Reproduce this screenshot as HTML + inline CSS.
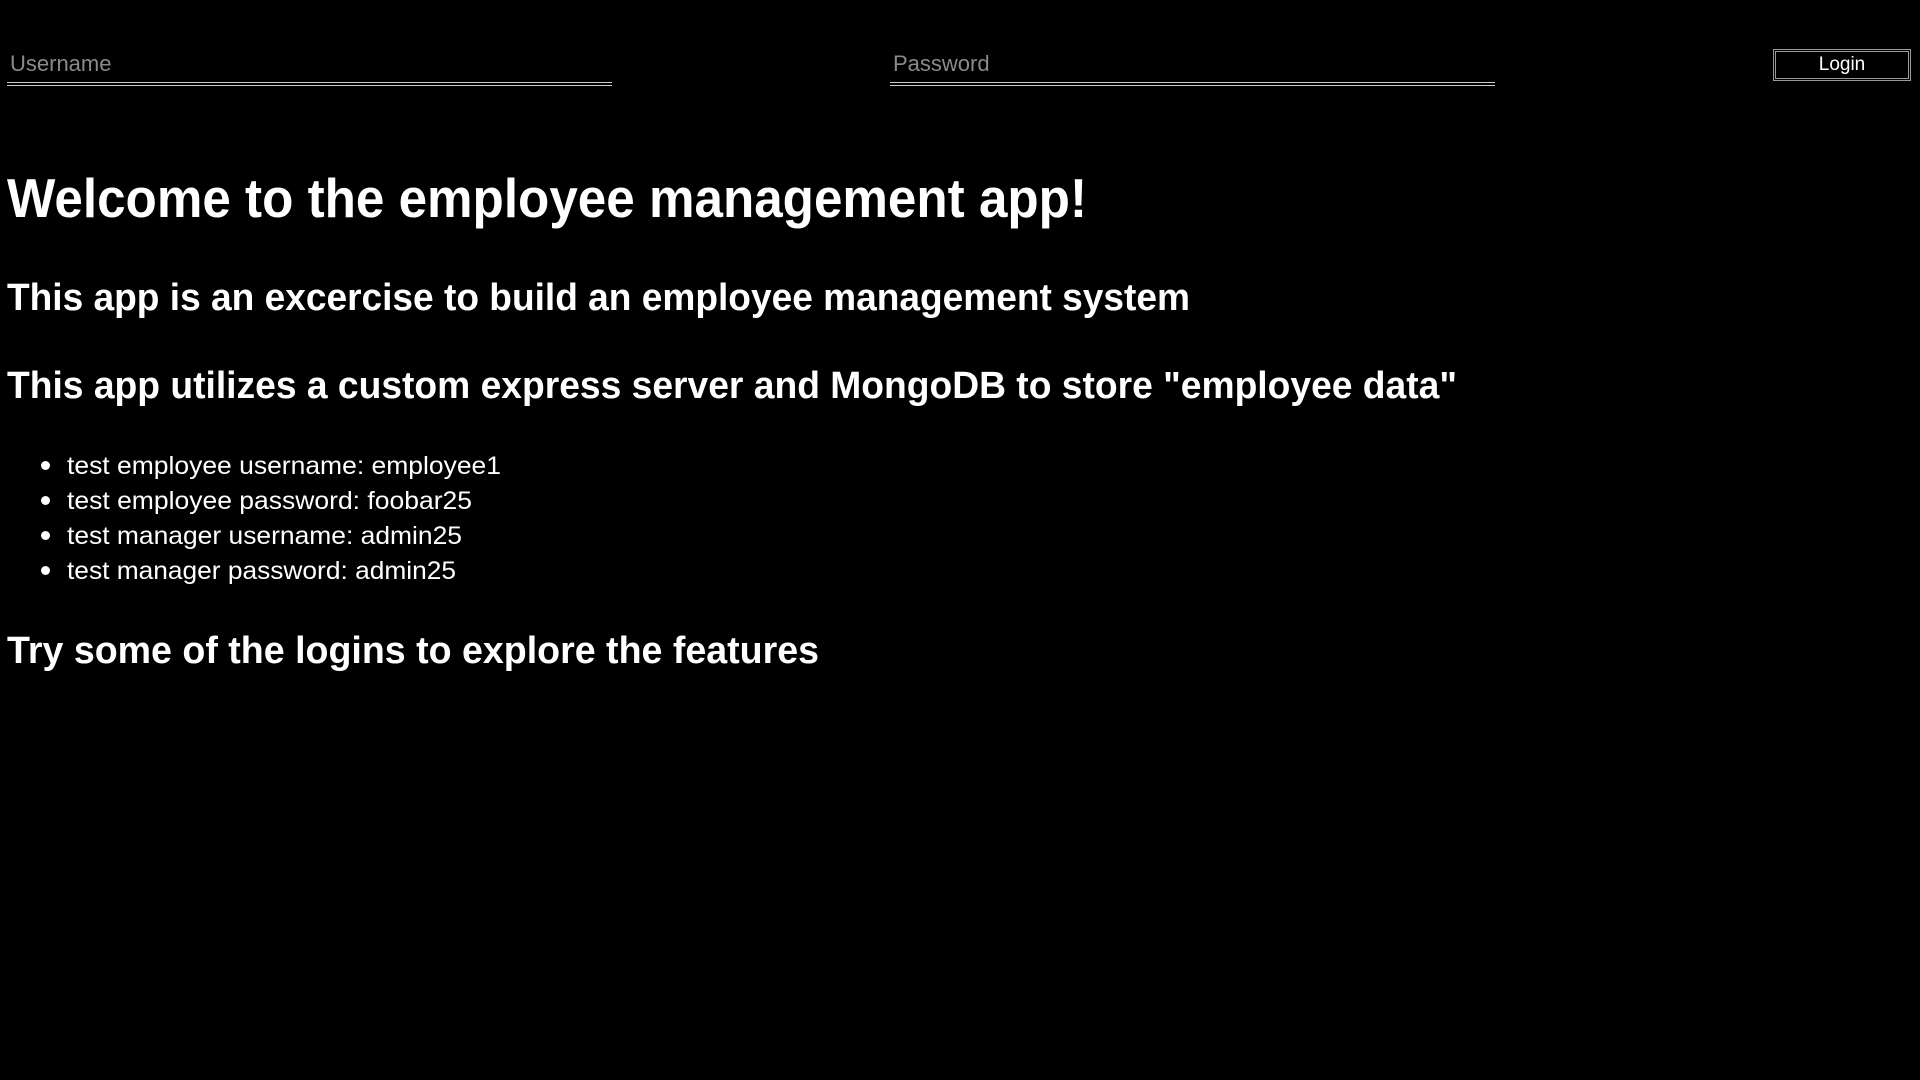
<!DOCTYPE html>
<html><head><meta charset="utf-8"><style>
html,body{margin:0;background:#000;width:1920px;height:1080px;overflow:hidden;color:#fff;font-family:"Liberation Sans",sans-serif}
.t{position:absolute;left:7px;white-space:nowrap;font-weight:bold;transform-origin:0 50%;line-height:1}
.inp{position:absolute;top:46px;height:36px;border-bottom:4px double #ccc;color:#8a8a8a;font-size:22px;line-height:36px;padding-left:3px;box-sizing:content-box}
.btn{position:absolute;left:1773px;top:49px;width:132px;height:26px;border:3px double #999;color:#fff;font-size:19px;text-align:center;line-height:26px}
.li{position:absolute;left:67px;font-size:25px;white-space:nowrap;transform-origin:0 50%;line-height:1}
.b{position:absolute;left:41px;width:9px;height:9px;border-radius:50%;background:#fff}
</style></head><body>
<div class="inp" style="left:7px;width:602px">Username</div>
<div class="inp" style="left:890px;width:602px">Password</div>
<div class="btn">Login</div>
<div class="t" data-w="1080" style="top:171px;font-size:55px">Welcome to the employee management app!</div>
<div class="t" data-w="1183" style="top:279px;font-size:38px">This app is an excercise to build an employee management system</div>
<div class="t" data-w="1450" style="top:367px;font-size:38px">This app utilizes a custom express server and MongoDB to store "employee data"</div>
<div class="b" style="top:461px"></div><div class="li" data-w="434" style="top:454px">test employee username: employee1</div>
<div class="b" style="top:496px"></div><div class="li" data-w="405" style="top:489px">test employee password: foobar25</div>
<div class="b" style="top:531px"></div><div class="li" data-w="395" style="top:524px">test manager username: admin25</div>
<div class="b" style="top:566px"></div><div class="li" data-w="389" style="top:559px">test manager password: admin25</div>
<div class="t" data-w="812" style="top:632px;font-size:38px">Try some of the logins to explore the features</div>
<script>
document.querySelectorAll('[data-w]').forEach(function(e){var w=e.getBoundingClientRect().width;e.style.transform='scaleX('+(e.dataset.w/w)+')';});
</script>
</body></html>
